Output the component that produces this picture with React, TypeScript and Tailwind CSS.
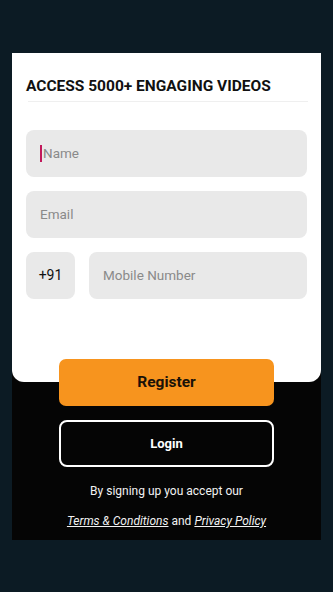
export default function App() {
  return (
    <div
      className="min-h-[592px] w-full bg-[#0c1b24] pt-[53px] px-[12px]"
      style={{ fontFamily: 'Roboto, "Noto Sans", sans-serif' }}
    >
      <div className="bg-[#050505] flex flex-col pb-[10px]">
        <div className="bg-white rounded-b-[12px] px-[14px] pt-[21px] pb-[83px]">
          <div className="text-[15.5px] leading-[24px] font-bold text-[#111]">
            ACCESS 5000+ ENGAGING VIDEOS
          </div>
          <div className="mt-[3px] ml-[2px] mr-[-1px] h-px bg-[#efefef]"></div>
          <div className="mt-[28px] flex flex-col gap-[14px]">
            <div className="h-[47px] rounded-[8px] bg-[#e9e9e9] flex items-center px-[14px] text-[13.5px] text-[#8a8a8a]">
              <span className="w-[2px] h-[17px] bg-[#c2185b] mr-[1px]"></span>
              <span>Name</span>
            </div>
            <div className="h-[47px] rounded-[8px] bg-[#e9e9e9] flex items-center px-[14px] text-[13.5px] text-[#8a8a8a]">
              Email
            </div>
            <div className="flex gap-[14px]">
              <div className="h-[47px] w-[49px] rounded-[8px] bg-[#e9e9e9] flex items-center justify-center text-[14px] text-[#111]">
                +91
              </div>
              <div className="h-[47px] flex-1 rounded-[8px] bg-[#e9e9e9] flex items-center px-[14px] text-[13.5px] text-[#8a8a8a]">
                Mobile Number
              </div>
            </div>
          </div>
        </div>
        <div className="mt-[-23px] flex flex-col items-center">
          <div className="w-[215px] h-[47px] rounded-[7px] bg-[#f7941e] flex items-center justify-center text-[15.5px] font-bold text-[#1a1208]">
            Register
          </div>
          <div className="mt-[14px] w-[215px] h-[47px] rounded-[8px] border-2 border-white flex items-center justify-center text-[13px] font-bold text-white">
            Login
          </div>
          <div className="mt-[15px] text-[12px] leading-[18px] text-[#f2f2f2]">
            By signing up you accept our
          </div>
          <div className="mt-[12px] text-[12px] leading-[18px] text-[#f2f2f2]">
            <span className="italic underline">Terms &amp; Conditions</span> and{" "}
            <span className="italic underline">Privacy Policy</span>
          </div>
        </div>
      </div>
    </div>
  );
}
